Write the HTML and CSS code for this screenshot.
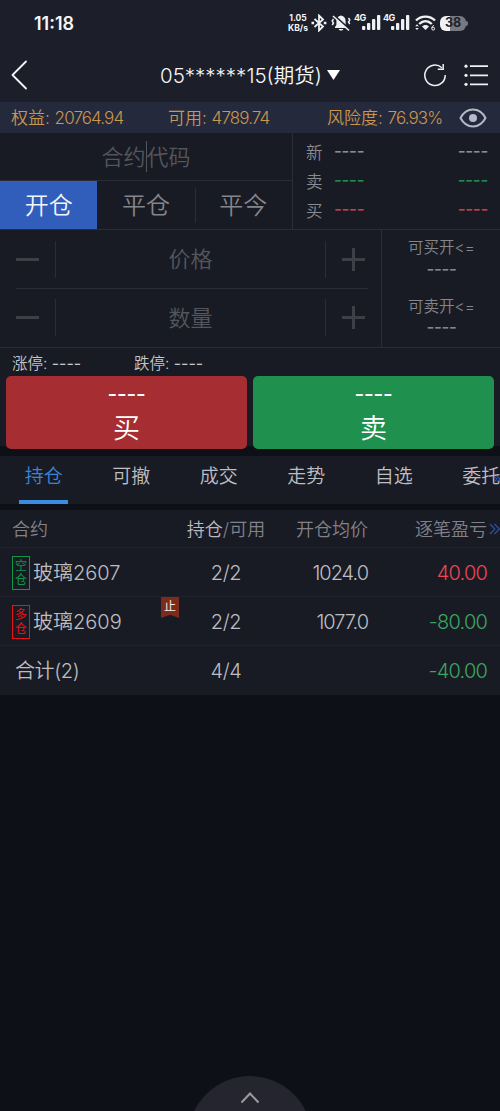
FILE: index.html
```
<!DOCTYPE html>
<html lang="zh-CN">
<head>
<meta charset="utf-8">
<title>期货交易</title>
<link rel="stylesheet" href="styles.css">
</head>
<body>
<div class="screen">
  <header class="status">
    <span class="clock">11:18</span>
    <div class="indicators">
      <div class="speed"><span>1.05</span><span>KB/s</span></div>
      <svg class="ic-bt" width="16" height="18" viewBox="0 0 16 18" fill="none" stroke="#f0f1f4" stroke-width="1.800"><path d="M3.500 5 12 12.500 8 16.500V1.500l4 4L3.500 13"/><path d="M.5 9h2.600M12.800 9h2.600" stroke-width="2.400"/></svg>
      <svg class="ic-bell" width="20" height="18" viewBox="0 0 20 18"><path d="M10 1.500c-3.300.6-4.600 2.600-4.600 5.500v4L4 13v1h12v-1l-1.400-2V7c0-2.900-1.300-4.900-4.600-5.500z" fill="#f0f1f4"/><path d="M7.700 15h4.600c-.5 2-4.100 2-4.600 0z" fill="#f0f1f4"/><path d="M4 2.200 19 15.700" stroke="#1c1f29" stroke-width="2"/><path d="M2 2l16 14.500" stroke="#f0f1f4" stroke-width="1.600"/><path d="M2.500 5 1.200 7l1.300 2-1.300 2M17.500 4l1.300 2-1.300 2 1.300 2" stroke="#f0f1f4" fill="none" stroke-width="1.500"/></svg>
      <div class="cell"><b>4G</b><svg width="19" height="16" viewBox="0 0 19 16" fill="#f0f1f4"><rect x="0" y="11" width="3.300" height="4" rx="1"/><rect x="5" y="8" width="3.300" height="7" rx="1"/><rect x="10" y="4" width="3.300" height="11" rx="1"/><rect x="15" y="0" width="3.300" height="15" rx="1"/></svg></div>
      <div class="cell"><b>4G</b><svg width="19" height="16" viewBox="0 0 19 16" fill="#f0f1f4"><rect x="0" y="11" width="3.300" height="4" rx="1"/><rect x="5" y="8" width="3.300" height="7" rx="1"/><rect x="10" y="4" width="3.300" height="11" rx="1"/><rect x="15" y="0" width="3.300" height="15" rx="1"/></svg></div>
      <svg class="ic-wifi" width="21" height="17" viewBox="0 0 21 17" fill="none" stroke="#f0f1f4" stroke-width="2.400"><path d="M1 5.500C6 .3 15 .3 20 5.500M4.200 9C8 5.300 13 5.300 16.800 9"/><path d="M7 11.500c2-2 5-2 7 0L10.500 15z" fill="#f0f1f4" stroke="none"/><path d="m.2 11.300 1.800-2 1.800 2zM.2 13l1.800 2 1.800-2z" fill="#f0f1f4" stroke="none"/><path d="M19 10.600c-1.500.2-2.200 1.200-2.200 2.700" stroke-width="1"/><circle cx="18.200" cy="13.700" r="1.400" stroke-width="1"/></svg>
      <div class="battery"><span>38</span></div>
    </div>
  </header>

  <nav class="titlebar">
    <svg class="back" width="17" height="30" viewBox="0 0 17 30" fill="none" stroke="#f4f5f8" stroke-width="1.800" stroke-linecap="round" stroke-linejoin="round"><path d="M15 1.500 1.500 15 15 28.500"/></svg>
    <h1 class="title">05******15(期货)</h1>
    <svg class="caret" width="13" height="10" viewBox="0 0 13 10"><path d="M0 0h13L6.500 10z" fill="#fff"/></svg>
    <svg class="refresh" width="24" height="24" viewBox="0 0 24 24" fill="none" stroke="#eef0f4" stroke-width="1.500"><path d="M18.800 4.700A10.200 10.200 0 1 0 22.200 12"/><path d="M20.200 1v5.200h-5.400"/></svg>
    <svg class="menu" width="25" height="22" viewBox="0 0 25 22"><path d="M6 2.200h18M6 11.300h18M6 20.300h18" stroke="#eef0f4" stroke-width="1.800"/><g fill="#eef0f4"><circle cx="2" cy="2.200" r="1.600"/><circle cx="2" cy="11.300" r="1.600"/><circle cx="2" cy="20.300" r="1.600"/></g></svg>
  </nav>

  <section class="account">
    <span class="equity">权益: <b>20764.94</b></span>
    <span class="avail">可用: <b>4789.74</b></span>
    <span class="risk">风险度: <b>76.93%</b></span>
    <svg class="eye" width="28" height="22" viewBox="0 0 28 22" fill="none" stroke="#b5bac8" stroke-width="2"><path d="M1.500 11C7.500-.3 20.500-.3 26.500 11 20.500 22.300 7.500 22.300 1.500 11z"/><circle cx="14" cy="11" r="4" fill="#b5bac8" stroke="none"/></svg>
  </section>

  <section class="entry">
    <div class="entry-left">
      <div class="contract"><span>合约</span><i></i><span>代码</span></div>
      <div class="modes">
        <div class="mode active">开仓</div>
        <div class="mode">平仓</div>
        <div class="mode split">平今</div>
      </div>
    </div>
    <div class="quotes">
      <div class="quote"><span>新</span><b>----</b><b>----</b></div>
      <div class="quote green"><span>卖</span><b>----</b><b>----</b></div>
      <div class="quote red"><span>买</span><b>----</b><b>----</b></div>
    </div>
  </section>

  <section class="order">
    <div class="steppers">
      <div class="stepper"><i class="minus"></i><div class="field">价格</div><i class="plus"></i></div>
      <div class="stepper"><i class="minus"></i><div class="field">数量</div><i class="plus"></i></div>
    </div>
    <div class="limits">
      <div class="limit"><span>可买开&lt;=</span><b>----</b></div>
      <div class="limit"><span>可卖开&lt;=</span><b>----</b></div>
    </div>
  </section>

  <section class="bounds"><span>涨停: <b>----</b></span><span>跌停: <b>----</b></span></section>

  <section class="actions">
    <div class="action buy"><b>----</b><span>买</span></div>
    <div class="action sell"><b>----</b><span>卖</span></div>
  </section>

  <section class="tabs">
    <div class="tab current">持仓</div>
    <div class="tab">可撤</div>
    <div class="tab">成交</div>
    <div class="tab">走势</div>
    <div class="tab">自选</div>
    <div class="tab">委托</div>
    <svg class="more-tabs" width="6" height="8" viewBox="0 0 6 8" fill="none" stroke="#2d57b0" stroke-width="1.200"><path d="m0 1 3 3-3 3M3 1l3 3-3 3"/></svg>
  </section>

  <section class="positions">
    <div class="row head">
      <span>合约</span><span class="qty"><em>持仓</em>/可用</span><span class="price">开仓均价</span><span class="pnl">逐笔盈亏</span>
      <svg class="more" width="11" height="12" viewBox="0 0 11 12" fill="none" stroke="#2c4d9c" stroke-width="1.300"><path d="m1 1 4.800 5L1 11M5.500 1l4.800 5-4.800 5"/></svg>
    </div>
    <div class="row">
      <div class="name"><span class="side short"><i>空</i><i>仓</i></span>玻璃2607</div><span class="qty">2/2</span><span class="price">1024.0</span><span class="pnl up">40.00</span>
    </div>
    <div class="row">
      <div class="name"><span class="side long"><i>多</i><i>仓</i></span>玻璃2609<span class="stop">止</span></div><span class="qty">2/2</span><span class="price">1077.0</span><span class="pnl down">-80.00</span>
    </div>
    <div class="row">
      <div class="name total">合计(2)</div><span class="qty">4/4</span><span class="price"></span><span class="pnl down">-40.00</span>
    </div>
  </section>

  <footer class="drawer"><div class="handle"><svg width="20" height="13" viewBox="0 0 20 13" fill="none" stroke="#9b9ca3" stroke-width="2"><path d="m1.500 11.500 8.500-9 8.500 9"/></svg></div></footer>
</div>
</body>
</html>
```

FILE: styles.css
```
* { box-sizing: border-box; }
body { margin: 0; background: #0e1018; }
b, i, em { font-weight: inherit; font-style: normal; }
svg { display: block; flex: none; }
.screen {
  width: 500px; height: 1111px; overflow: hidden;
  display: flex; flex-direction: column;
  background: #0e1018; color: #bdbec3;
  font-family: Inter, "Noto Sans CJK SC", sans-serif;
  font-weight: 350; line-height: 1; white-space: nowrap;
}

/* status bar */
.status { height: 48px; flex: none; background: #1c1f29; display: flex; justify-content: space-between; padding: 0 34px 2px 34px; align-items: center; color: #f4f5f8; }
.clock { font-size: 18px; font-weight: 600; padding-top: 2px; }
.indicators { display: flex; align-items: center; }
.speed { display: flex; flex-direction: column; width: 20px; gap: 1px; font-size: 8.500px; font-weight: 700; align-items: center; margin-right: 3px; }
.speed span { line-height: 9px; }
.ic-bell { margin: 0 3px 0 4px; }
.cell { display: flex; width: 27px; align-items: flex-end; justify-content: flex-end; position: relative; height: 16px; margin-right: 2px; }
.cell b { position: absolute; left: 0; top: -2px; font-size: 9px; font-weight: 700; letter-spacing: -0.5px; }
.ic-wifi { margin: 0 4px 0 3px; }
.battery { width: 26px; height: 15px; border-radius: 6px; background: linear-gradient(90deg, #f0f1f4 38%, #777980 38%); display: flex; align-items: center; justify-content: center; color: #1c1f29; font-size: 12.500px; font-weight: 700; position: relative; }
.battery span { padding-top: 1px; }
.battery::after { content: ""; position: absolute; right: -2px; top: 5px; width: 2px; height: 5px; border-radius: 0 2px 2px 0; background: #777980; }

/* title bar */
.titlebar { height: 54px; flex: none; background: #1c1f29; display: flex; align-items: center; padding: 0 11px; }
.title { margin: 2px 5px 0 132px; font-size: 20.500px; font-weight: 350; color: #f6f7fa; width: 163px; }
.refresh { margin-left: 83px; }
.menu { margin-left: 17px; }

/* account summary */
.account { height: 31px; flex: none; display: flex; align-items: center; background: #242a3b; color: #cb9650; font-size: 17px; padding: 0 12px 0 11px; }
.account span { padding-top: 2px; }
.account b { letter-spacing: -0.9px; }
.equity { width: 157px; }
.avail { width: 159px; }
.risk { width: 132px; }

/* contract and quotes */
.entry { height: 97px; flex: none; display: flex; background: #191b24; border-bottom: 1px solid #2b2d35; }
.entry-left { width: 293px; border-right: 1px solid #2b2d35; }
.contract { height: 48px; display: flex; align-items: center; justify-content: center; color: #54565d; font-size: 22px; border-bottom: 1px solid #2b2d35; }
.contract i { width: 1px; height: 31px; background: #54565d; }
.modes { height: 48px; display: flex; }
.mode { width: 97.500px; display: flex; align-items: center; justify-content: center; font-size: 24px; color: #85868c; position: relative; padding-top: 2px; }
.mode.active { background: #315dbb; color: #f2f5fb; }
.mode.split::before { content: ""; position: absolute; left: 0; top: 7px; height: 35px; width: 1px; background: #2b2d35; }
.quotes { flex: 1; display: flex; flex-direction: column; padding: 5px 12px 4px 13px; }
.quote { flex: 1; display: flex; align-items: center; font-size: 16.500px; color: #8b8c92; }
.quote span { width: 28px; padding-top: 1px; }
.quote b { font-size: 17px; font-weight: 500; letter-spacing: -0.3px; margin-top: -2px; }
.quote b + b { margin-left: auto; }
.quote.green b { color: #218b50; }
.quote.red b { color: #c83d48; }

/* order entry */
.order { height: 118px; flex: none; display: flex; background: #191b24; border-bottom: 1px solid #2b2d35; }
.steppers { width: 382px; border-right: 1px solid #2b2d35; padding: 0 13px 0 16px; }
.stepper { height: 58px; display: flex; align-items: center; justify-content: space-between; padding-right: 3px; }
.stepper + .stepper { border-top: 1px solid #2b2d35; }
.field { width: 271px; height: 37px; display: flex; align-items: center; justify-content: center; border: solid #2b2d35; border-width: 0 1px; font-size: 22px; color: #54565d; }
.minus, .plus { width: 23px; height: 23px; background: linear-gradient(#3e4047, #3e4047) center / 23px 3px no-repeat; }
.plus { background: linear-gradient(#3e4047, #3e4047) center / 23px 3px no-repeat, linear-gradient(#3e4047, #3e4047) center / 3px 23px no-repeat; }
.limits { flex: 1; }
.limit { height: 58.500px; display: flex; flex-direction: column; align-items: center; padding-top: 10px; font-size: 15.500px; color: #85868c; gap: 5px; padding-left: 1px; }
.limit b { font-size: 17px; font-weight: 500; letter-spacing: -0.4px; }

.bounds { height: 28px; flex: none; display: flex; align-items: center; background: #191b24; font-size: 15.500px; color: #c5c6ca; padding: 2px 0 0 12px; }
.bounds span { width: 122px; }
.bounds b { font-size: 16px; font-weight: 400; }

/* buy and sell */
.actions { height: 80px; flex: none; display: flex; gap: 6px; padding: 0 6px 7px; background: linear-gradient(#191b24 70px, #0e1018 70px); }
.action { flex: 1; border-radius: 5px; display: flex; flex-direction: column; align-items: center; color: #fff; padding-top: 7px; font-size: 27px; gap: 11px; }
.action b { font-size: 21px; font-weight: 450; letter-spacing: -0.15px; }
.buy { background: #a62d32; }
.sell { background: #20904f; }

/* tabs */
.tabs { height: 48px; flex: none; display: flex; background: #191b24; position: relative; font-size: 19px; overflow: hidden; }
.tab { width: 87.500px; flex: none; text-align: center; padding-top: 11px; position: relative; }
.tab.current { color: #3983d8; }
.tab.current::after { content: ""; position: absolute; left: 19px; bottom: 0; width: 49px; height: 4px; background: #3c8be3; }
.more-tabs { position: absolute; right: 0; top: 19px; }

/* positions */
.positions { margin-top: 6px; flex: none; background: #191b24; }
.row { height: 49px; display: grid; grid-template-columns: 174px 80px 102px 119px; padding: 1px 0 0 12px; align-items: center; border-bottom: 1px solid #20222b; font-size: 20px; position: relative; }
.row.head { height: 38px; font-size: 18px; color: #818289; padding-top: 2px; }
.row:last-child { border: 0; }
.head em { color: #b9bac0; }
.qty { text-align: center; letter-spacing: -0.3px; }
.head .qty { letter-spacing: 0; }
.price, .pnl { text-align: right; }
.row:not(.head) .price { letter-spacing: -1px; }
.row:not(.head) .pnl { letter-spacing: -0.8px; }
.up { color: #ec4556; }
.down { color: #3ba660; }
.more { position: absolute; left: 489px; top: 13px; }
.name { display: flex; align-items: center; gap: 3px; position: relative; height: 48px; }
.total { padding-left: 3px; letter-spacing: -0.4px; }
.side { width: 18px; height: 34px; border: 1px solid; display: flex; flex-direction: column; align-items: center; justify-content: space-evenly; font-size: 12px; font-weight: 400; }
.short { color: #109647; }
.long { color: #ed1118; }
.stop { position: absolute; left: 149px; top: -1px; width: 18px; height: 21px; background: #7d2c1c; color: #f4ece8; font-size: 12px; font-weight: 400; line-height: 20px; text-align: center; clip-path: polygon(0 0, 100% 0, 100% 100%, 50% 85%, 0 100%); }

/* drawer handle */
.drawer { margin-top: auto; height: 35px; flex: none; overflow: hidden; display: flex; justify-content: center; }
.handle { width: 124px; height: 124px; flex: none; border-radius: 50%; background: #24252e; display: flex; justify-content: center; padding-top: 15px; }
```
